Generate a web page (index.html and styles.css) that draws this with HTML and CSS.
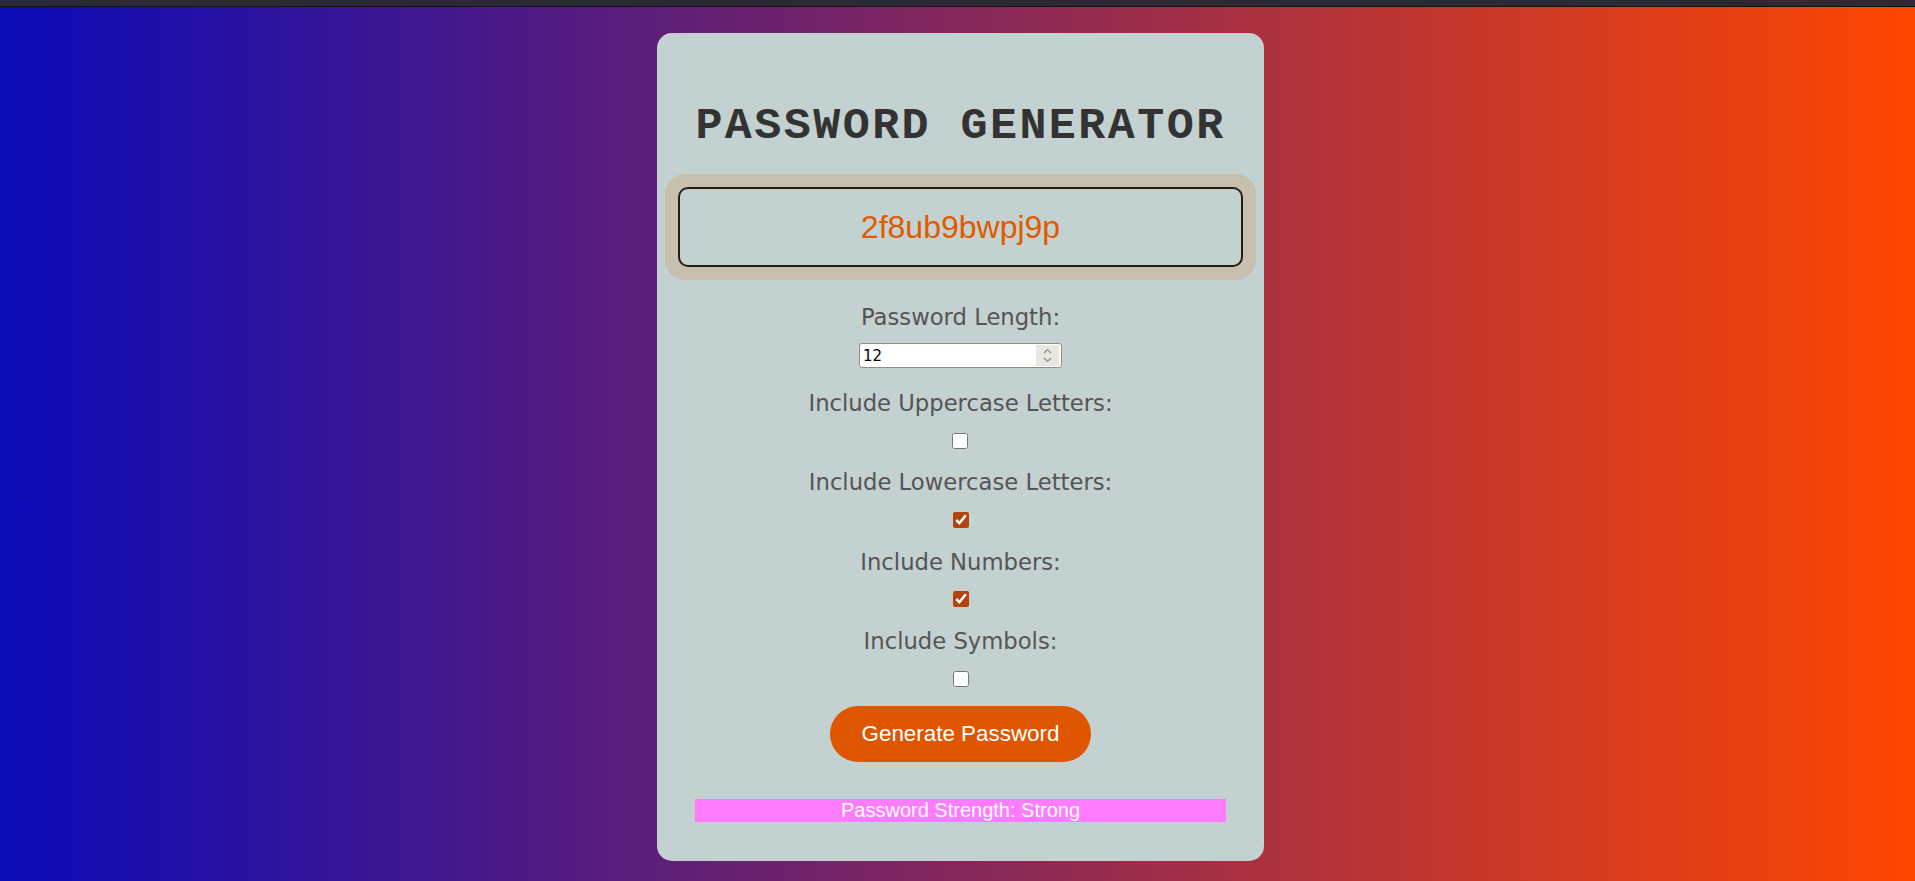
FILE: index.html
```html
<!DOCTYPE html>
<html lang="en">
<head>
<meta charset="utf-8">
<title>Password Generator</title>
<link rel="stylesheet" href="styles.css">
</head>
<body>
<div class="topbar"></div>
<main class="page">
  <section class="card">
    <h1 class="title">PASSWORD GENERATOR</h1>
    <div class="display-wrap">
      <div class="display">2f8ub9bwpj9p</div>
    </div>

    <div class="field field-num">
      <label class="label" for="len">Password Length:</label>
      <div class="numbox">
        <input class="num" id="len" type="number" value="12">
        <span class="spin">
          <svg width="9" height="6" viewBox="0 0 9 6"><path d="M1 5 L4.5 1.5 L8 5" fill="none" stroke="#8c8a82" stroke-width="1.2"/></svg>
          <svg width="9" height="6" viewBox="0 0 9 6"><path d="M1 1 L4.5 4.5 L8 1" fill="none" stroke="#8c8a82" stroke-width="1.2"/></svg>
        </span>
      </div>
    </div>

    <div class="field">
      <label class="label" for="up">Include Uppercase Letters:</label>
      <input class="cb" id="up" type="checkbox">
    </div>

    <div class="field">
      <label class="label" for="low">Include Lowercase Letters:</label>
      <input class="cb" id="low" type="checkbox" checked>
    </div>

    <div class="field">
      <label class="label" for="num">Include Numbers:</label>
      <input class="cb" id="num" type="checkbox" checked>
    </div>

    <div class="field field-last">
      <label class="label" for="sym">Include Symbols:</label>
      <input class="cb" id="sym" type="checkbox">
    </div>

    <button class="gen" type="button">Generate Password</button>
    <div class="strength">Password Strength: Strong</div>
  </section>
</main>
</body>
</html>
```

FILE: styles.css
```css
html, body {
  margin: 0;
  height: 100%;
}

body {
  background: linear-gradient(to right, #0a0ab8, #ff4500);
  font-family: "DejaVu Sans", Verdana, sans-serif;
  overflow: hidden;
}

.topbar {
  height: 6px;
  background: #2a2934;
  border-bottom: 1px solid #121212;
}

.page {
  display: flex;
  justify-content: center;
  padding: 26px 0 0 6px;
}

.card {
  width: 607px;
  box-sizing: border-box;
  background: #c3d1d0;
  border-radius: 15px;
  padding: 0 8px 38.5px;
  display: flex;
  flex-direction: column;
  align-items: center;
}

.title {
  margin: 67.5px 0 22.5px;
  font-family: "Liberation Mono", "Courier New", monospace;
  font-weight: bold;
  font-size: 45px;
  line-height: 51px;
  letter-spacing: 2.45px;
  color: #333;
  white-space: nowrap;
}

.display-wrap {
  align-self: stretch;
  background: #c8c0ae;
  border-radius: 20px;
  padding: 13px;
  margin-bottom: 24px;
}

.display {
  height: 76px;
  border: 2px solid #2b1b0c;
  border-radius: 10px;
  background: #c3d1d0;
  display: flex;
  align-items: center;
  justify-content: center;
  font-family: "Liberation Sans", Arial, sans-serif;
  font-size: 32px;
  color: #e05a00;
}

.field {
  display: flex;
  flex-direction: column;
  align-items: center;
  gap: 16.5px;
  margin-bottom: 20.8px;
}

.field-num {
  gap: 13px;
  margin-bottom: 22.2px;
}

.field-last {
  margin-bottom: 19.6px;
}

.label {
  font-size: 22.7px;
  line-height: 26px;
  color: #555;
}

.numbox {
  width: 203px;
  height: 25px;
  box-sizing: border-box;
  border: 1px solid #908d85;
  border-radius: 3px;
  background: #fff;
  display: flex;
  align-items: center;
  padding: 1px 2px 1px 0;
}

.num {
  flex: 1;
  min-width: 0;
  border: none;
  outline: none;
  background: transparent;
  padding: 0 0 0 3px;
  font-family: "DejaVu Sans", Tahoma, sans-serif;
  font-size: 15px;
  font-weight: normal;
  color: #000;
  -moz-appearance: textfield;
}

.num::-webkit-inner-spin-button,
.num::-webkit-outer-spin-button {
  -webkit-appearance: none;
  margin: 0;
}

.spin {
  width: 23px;
  height: 21px;
  background: #e9e7e2;
  display: flex;
  flex-direction: column;
  align-items: center;
  justify-content: center;
  gap: 3px;
}

.spin svg {
  display: block;
}

.cb {
  width: 16px;
  height: 16px;
  margin: 0;
  accent-color: #b4440e;
}

.gen {
  border: none;
  border-radius: 30px;
  background: #df5600;
  color: #fff;
  font-family: "Liberation Sans", Arial, sans-serif;
  font-size: 22.4px;
  line-height: 26px;
  padding: 15px 32px;
  margin: 0 0 37px;
  cursor: pointer;
}

.strength {
  align-self: stretch;
  margin: 0 30px;
  background: #ff7bff;
  color: #fff;
  font-family: "Liberation Sans", Arial, sans-serif;
  font-size: 20px;
  line-height: 23px;
  text-align: center;
}
```
